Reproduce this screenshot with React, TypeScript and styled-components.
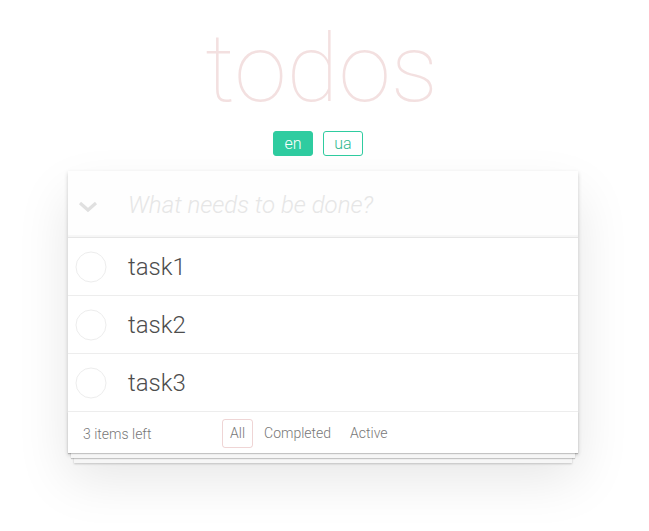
import React from "react";
import styled, { createGlobalStyle } from "styled-components";

const Global = createGlobalStyle`
  html, body { margin: 0; padding: 0; background: #ffffff; }
  body {
    font-family: Roboto, "Liberation Sans", sans-serif;
    font-weight: 300;
    color: #4d4d4d;
    -webkit-font-smoothing: antialiased;
  }
`;

const Page = styled.div`
  width: 510px;
  margin: 0 auto;
  padding: 16px 3px 70px 0;
  display: flex;
  flex-direction: column;
  align-items: stretch;
`;

const Title = styled.h1`
  margin: 0;
  text-align: center;
  font-size: 95px;
  font-weight: 100;
  line-height: 105px;
  height: 105px;
  padding-right: 3px;
  color: rgba(175, 47, 47, 0.15);
  font-family: Roboto, "Liberation Sans", sans-serif;
`;

const LangBar = styled.div`
  display: flex;
  justify-content: center;
  gap: 10px;
  margin-top: 10px;
  margin-bottom: 15px;
  padding-right: 10px;
`;

const LangButton = styled.button<{ $active?: boolean }>`
  width: 40px;
  height: 25px;
  padding: 0;
  border-radius: 3px;
  border: 1px solid #2fcca0;
  background: ${(p) => (p.$active ? "#2fcca0" : "#ffffff")};
  color: ${(p) => (p.$active ? "#ffffff" : "#2fb890")};
  font-family: Roboto, "Liberation Sans", sans-serif;
  font-size: 16px;
  font-weight: 300;
  line-height: 23px;
`;

const Card = styled.section`
  background: #fff;
  box-shadow: 0 2px 4px 0 rgba(0, 0, 0, 0.2), 0 25px 50px 0 rgba(0, 0, 0, 0.1);
  display: flex;
  flex-direction: column;
`;

const Header = styled.div`
  display: flex;
  align-items: center;
  height: 66px;
  background: rgba(0, 0, 0, 0.003);
  box-shadow: inset 0 -2px 1px rgba(0, 0, 0, 0.03);
  border-bottom: 1px solid #e6e6e6;
`;

const ToggleAll = styled.div`
  width: 60px;
  height: 66px;
  display: flex;
  align-items: center;
  justify-content: flex-start;
  padding: 5px 0 0 10px;
  box-sizing: border-box;
`;

const NewTodo = styled.input`
  flex: 1;
  border: none;
  outline: none;
  background: transparent;
  font-family: Roboto, "Liberation Sans", sans-serif;
  font-size: 24px;
  font-weight: 300;
  color: #4d4d4d;
  padding: 2px 16px 0 0;
  &::placeholder {
    font-style: italic;
    font-weight: 300;
    color: #e6e6e6;
  }
`;

const List = styled.ul`
  list-style: none;
  margin: 0;
  padding: 0;
`;

const Item = styled.li`
  display: flex;
  align-items: center;
  height: 57px;
  border-bottom: 1px solid #ededed;
  font-size: 24px;
`;

const CheckWrap = styled.div`
  width: 60px;
  display: flex;
  justify-content: flex-start;
  padding-left: 7px;
  box-sizing: border-box;
`;

const Label = styled.span`
  font-size: 24px;
  font-weight: 300;
  color: #4d4d4d;
  line-height: 28px;
`;

const Footer = styled.footer`
  display: flex;
  align-items: center;
  height: 41px;
  padding: 2px 15px 0;
  box-sizing: border-box;
  color: #777;
  font-size: 14px;
  box-shadow: 0 1px 1px rgba(0, 0, 0, 0.2), 0 8px 0 -3px #f6f6f6,
    0 9px 1px -3px rgba(0, 0, 0, 0.2), 0 16px 0 -6px #f6f6f6,
    0 17px 2px -6px rgba(0, 0, 0, 0.2);
`;

const Count = styled.span`
  width: 139px;
  flex: none;
`;

const Filters = styled.ul`
  list-style: none;
  margin: 0;
  padding: 0;
  display: flex;
  gap: 3px;
`;

const Filter = styled.a<{ $selected?: boolean }>`
  display: block;
  padding: 5px 7px;
  border: 1px solid ${(p) => (p.$selected ? "rgba(175, 47, 47, 0.2)" : "transparent")};
  border-radius: 3px;
  color: #777;
  text-decoration: none;
  line-height: 17px;
`;

const Circle = () => (
  <svg width="32" height="32" viewBox="0 0 32 32">
    <circle cx="16" cy="16" r="15" fill="none" stroke="#ededed" strokeWidth="1" />
  </svg>
);

const Chevron = () => (
  <svg width="20" height="12" viewBox="0 0 20 12">
    <polyline points="2,2 10,9 18,2" fill="none" stroke="#e0e0e0" strokeWidth="3.2" />
  </svg>
);

export default function App() {
  const tasks = ["task1", "task2", "task3"];
  return (
    <>
      <Global />
      <Page>
        <Title>todos</Title>
        <LangBar>
          <LangButton $active>en</LangButton>
          <LangButton>ua</LangButton>
        </LangBar>
        <Card>
          <Header>
            <ToggleAll>
              <Chevron />
            </ToggleAll>
            <NewTodo placeholder="What needs to be done?" />
          </Header>
          <List>
            {tasks.map((t) => (
              <Item key={t}>
                <CheckWrap>
                  <Circle />
                </CheckWrap>
                <Label>{t}</Label>
              </Item>
            ))}
          </List>
          <Footer>
            <Count>3 items left</Count>
            <Filters>
              <li>
                <Filter href="#/" $selected>
                  All
                </Filter>
              </li>
              <li>
                <Filter href="#/completed">Completed</Filter>
              </li>
              <li>
                <Filter href="#/active">Active</Filter>
              </li>
            </Filters>
          </Footer>
        </Card>
      </Page>
    </>
  );
}
